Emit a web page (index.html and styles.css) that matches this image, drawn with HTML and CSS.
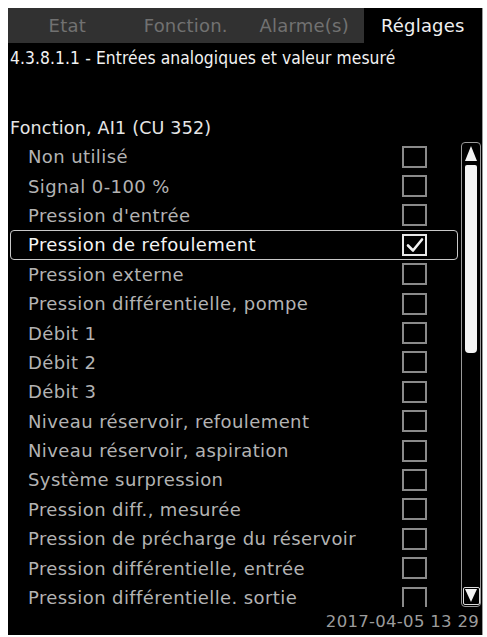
FILE: index.html
```html
<!DOCTYPE html>
<html lang="fr">
<head>
    <meta charset="UTF-8">
    <title>Réglages</title>
    <link rel="stylesheet" href="styles.css">
</head>
<body>
    <div class="screen">
        <div class="tabs">
            <div class="tab">Etat</div>
            <div class="tab">Fonction.</div>
            <div class="tab">Alarme(s)</div>
            <div class="tab active">Réglages</div>
        </div>
        <div class="menu-title">4.3.8.1.1 - Entrées analogiques et valeur mesuré</div>

        <div class="group-label">Fonction, AI1 (CU 352)</div>

        <div class="list-area">
            <ul class="options">
                <li class="option"><span>Non utilisé</span><i class="box"></i></li>
                <li class="option"><span>Signal 0-100 %</span><i class="box"></i></li>
                <li class="option"><span>Pression d'entrée</span><i class="box"></i></li>
                <li class="option selected"><span>Pression de refoulement</span>
                    <i class="box checked">
                        <svg viewBox="0 0 20 18" width="20" height="18"><path d="M3 9.5 L8 14.5 L17 3.5" fill="none" stroke="#f2f2f2" stroke-width="2.6" stroke-linecap="round" stroke-linejoin="round"/></svg>
                    </i>
                </li>
                <li class="option"><span>Pression externe</span><i class="box"></i></li>
                <li class="option"><span>Pression différentielle, pompe</span><i class="box"></i></li>
                <li class="option"><span>Débit 1</span><i class="box"></i></li>
                <li class="option"><span>Débit 2</span><i class="box"></i></li>
                <li class="option"><span>Débit 3</span><i class="box"></i></li>
                <li class="option"><span>Niveau réservoir, refoulement</span><i class="box"></i></li>
                <li class="option"><span>Niveau réservoir, aspiration</span><i class="box"></i></li>
                <li class="option"><span>Système surpression</span><i class="box"></i></li>
                <li class="option"><span>Pression diff., mesurée</span><i class="box"></i></li>
                <li class="option"><span>Pression de précharge du réservoir</span><i class="box"></i></li>
                <li class="option"><span>Pression différentielle, entrée</span><i class="box"></i></li>
                <li class="option"><span>Pression différentielle. sortie</span><i class="box"></i></li>
            </ul>

            <div class="scrollbar">
                <div class="arrow up">
                    <svg viewBox="0 0 12 16" width="12" height="16"><polygon points="6,1 12,16 0,16" fill="#f4f4f4"/></svg>
                </div>
                <div class="thumb"></div>
                <div class="track-space"></div>
                <div class="arrow down">
                    <svg viewBox="0 0 12 14" width="12" height="14"><polygon points="0,0 12,0 6,13" fill="#f4f4f4"/></svg>
                </div>
            </div>
        </div>

        <div class="status">2017-04-05 13 29</div>
    </div>
</body>
</html>
```

FILE: styles.css
```css
body {
    margin: 0;
    background-color: #ffffff;
    font-family: "DejaVu Sans", sans-serif;
}

.screen {
    margin: 8px 0 0 8px;
    width: 474px;
    height: 627px;
    background-color: #000;
    box-shadow: 1px 0 0 #9a9a9a, 0 1px 0 #bbb;
    display: flex;
    flex-direction: column;
    overflow: hidden;
}

.tabs {
    display: grid;
    grid-template-columns: repeat(4, 1fr);
    height: 35px;
}

.tab {
    background-color: #313131;
    color: #717171;
    font-size: 18px;
    letter-spacing: 0.2px;
    display: flex;
    align-items: center;
    justify-content: center;
}

.tab.active {
    background-color: #000;
    color: #f0f0f0;
}

.menu-title {
    height: 30px;
    line-height: 30px;
    padding-left: 2px;
    color: #f2f2f2;
    font-family: "DejaVu Sans Condensed", "DejaVu Sans", sans-serif;
    font-size: 17.3px;
    letter-spacing: 0.1px;
}

.group-label {
    margin-top: 41px;
    height: 28px;
    line-height: 28px;
    padding-left: 2px;
    color: #e6e6e6;
    font-size: 17.5px;
    letter-spacing: 0.2px;
}

.list-area {
    display: flex;
    height: 465px;
}

.options {
    list-style: none;
    margin: 0 0 0 2px;
    padding: 0;
    width: 448px;
    overflow: hidden;
}

.option {
    box-sizing: border-box;
    height: 29.4px;
    display: flex;
    align-items: center;
    justify-content: space-between;
    padding: 0 30px 0 17px;
    color: #b3b3b3;
    font-size: 18px;
    letter-spacing: 0.4px;
    border: 1.5px solid transparent;
    border-radius: 4px;
}

.option.selected {
    color: #f4f4f4;
    border-color: #c8c8c8;
}

.box {
    box-sizing: border-box;
    width: 25px;
    height: 22px;
    border: 2px solid #8a8a8a;
    display: flex;
    align-items: center;
    justify-content: center;
}

.box.checked {
    border-color: #e8e8e8;
}

.scrollbar {
    box-sizing: border-box;
    margin-left: 3px;
    width: 20px;
    height: 465px;
    border: 1.5px solid #9a9a9a;
    border-radius: 4px;
    display: flex;
    flex-direction: column;
    align-items: center;
    padding: 2px 0 1px;
}

.arrow {
    width: 13px;
    display: flex;
    justify-content: center;
}

.arrow.up {
    height: 18px;
    align-items: flex-start;
}

.thumb {
    margin-top: 2px;
    width: 12px;
    height: 188px;
    background-color: #f4f4f4;
    border-radius: 2px 2px 4px 4px;
}

.track-space {
    flex: 1;
}

.arrow.down {
    box-sizing: border-box;
    width: 17px;
    height: 18px;
    border: 1.5px solid #dcdcdc;
    border-radius: 2px;
    align-items: center;
}

.status {
    flex: 1;
    display: flex;
    align-items: center;
    justify-content: flex-end;
    padding-right: 3px;
    color: #9c9c9c;
    font-size: 16.5px;
    letter-spacing: 0.3px;
}
```
